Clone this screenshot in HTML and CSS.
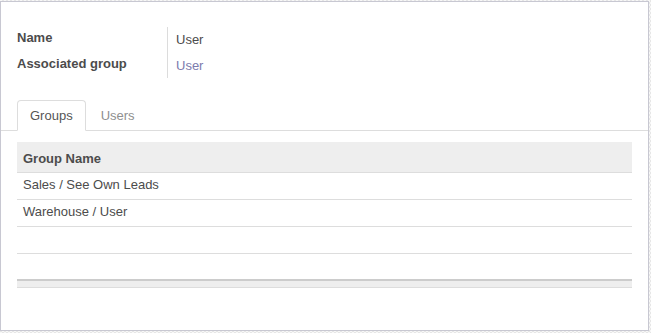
FILE: index.html
```html
<!DOCTYPE html>
<html>
<head>
<meta charset="utf-8">
<link rel="stylesheet" href="styles.css">
</head>
<body>
<div class="sheet">
  <div class="fields">
    <div class="label">Name</div>
    <div class="value">User</div>
    <div class="label">Associated group</div>
    <div class="value"><a class="link" href="#">User</a></div>
  </div>
  <ul class="tabs">
    <li class="tab active">Groups</li>
    <li class="tab">Users</li>
  </ul>
  <table class="list">
    <thead>
      <tr><th>Group Name</th></tr>
    </thead>
    <tbody>
      <tr><td>Sales / See Own Leads</td></tr>
      <tr><td>Warehouse / User</td></tr>
      <tr><td></td></tr>
      <tr class="last"><td></td></tr>
    </tbody>
    <tfoot>
      <tr><td></td></tr>
    </tfoot>
  </table>
</div>
</body>
</html>
```
FILE: styles.css
```css
html, body {
  margin: 0;
  padding: 0;
}
body {
  width: 651px;
  height: 333px;
  overflow: hidden;
  font-family: "Liberation Sans", Arial, sans-serif;
  font-size: 13px;
  color: #4c4c4c;
  background-color: #f4f4f4;
  background-image: repeating-conic-gradient(#e6e6e6 0 25%, #f7f7f7 0 50%);
  background-size: 4px 4px;
}
.sheet {
  box-sizing: border-box;
  margin-top: 1px;
  width: 649px;
  height: 330px;
  background: #fff;
  border: 1px solid #c8c8d2;
  padding: 25px 16px 0 16px;
}
.fields {
  display: grid;
  grid-template-columns: 150px 1fr;
  grid-auto-rows: 25.5px;
}
.label {
  font-weight: bold;
  line-height: 18px;
  padding-top: 2px;
  color: #4c4c4c;
}
.value {
  border-left: 1px solid #dcdcdc;
  padding-left: 8px;
  line-height: 18px;
  padding-top: 4px;
  color: #4c4c4c;
}
.link {
  color: #7c7bad;
  text-decoration: none;
}
.tabs {
  list-style: none;
  margin: 22px -16px 0 -16px;
  padding: 0 0 0 16px;
  display: flex;
  border-bottom: 1px solid #dddddd;
}
.tab {
  border: 1px solid transparent;
  border-radius: 4px 4px 0 0;
  margin-right: 2px;
  margin-bottom: -1px;
  padding: 0 12px;
  line-height: 29px;
  color: #8f8f8f;
}
.tab.active {
  border-color: #dddddd #dddddd #ffffff #dddddd;
  background: #fff;
  color: #555555;
}
.list {
  margin-top: 11px;
  width: 100%;
  border-collapse: collapse;
}
.list th {
  background: #eeeeee;
  text-align: left;
  font-weight: bold;
  height: 30px;
  padding: 4px 6px 0 6px;
  box-sizing: border-box;
  line-height: 26px;
  vertical-align: top;
  border-bottom: 1px solid #dddddd;
  color: #4c4c4c;
}
.list td {
  height: 26px;
  padding: 0 6px;
  line-height: 24px;
  vertical-align: top;
  border-bottom: 1px solid #dddddd;
}
.list tbody tr.last td {
  height: 25px;
  border-bottom: none;
}
.list tfoot td {
  height: 6px;
  padding: 0;
  background: #eeeeee;
  border-top: 2px solid #cccccc;
  border-bottom: 1px solid #dddddd;
}
```
